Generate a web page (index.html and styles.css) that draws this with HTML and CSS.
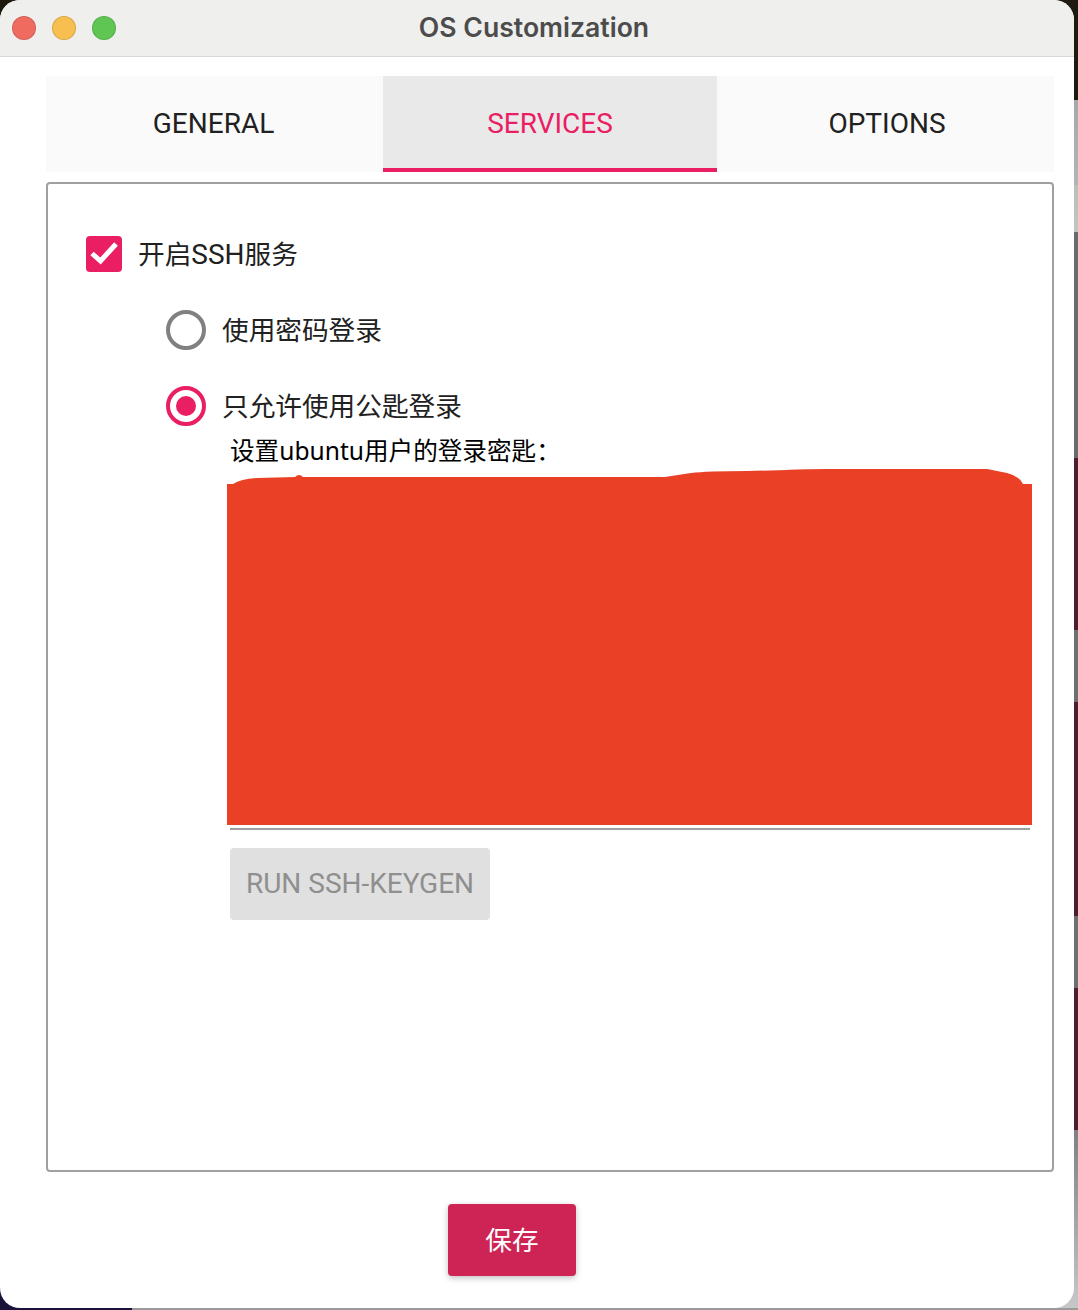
FILE: index.html
```html
<!DOCTYPE html>
<html lang="zh-CN">
<head>
  <meta charset="UTF-8" />
  <title>OS Customization</title>
  <link rel="stylesheet" href="styles.css">
</head>
<body>

  <div class="window">

    <!-- TITLE BAR -->
    <div class="titlebar">
      <div class="traffic">
        <span class="light red"></span>
        <span class="light yellow"></span>
        <span class="light green"></span>
      </div>
      <div class="title">OS Customization</div>
    </div>

    <div class="content">

      <!-- TABS -->
      <div class="tabs">
        <div class="tab">GENERAL</div>
        <div class="tab active">SERVICES</div>
        <div class="tab">OPTIONS</div>
      </div>

      <!-- SERVICES PANEL -->
      <div class="panel">
        <div class="check-row">
          <span class="checkbox">
            <svg width="36" height="36" viewBox="0 0 36 36">
              <path d="M6 17.5 L14.5 25 L30 8" fill="none" stroke="#fff" stroke-width="5"/>
            </svg>
          </span>
          <span class="row-text">开启<span class="latin">SSH</span>服务</span>
        </div>

        <div class="radio-group">
          <div class="radio-row">
            <span class="radio"></span>
            <span class="row-text">使用密码登录</span>
          </div>
          <div class="radio-row">
            <span class="radio on"></span>
            <span class="row-text">只允许使用公匙登录</span>
          </div>
        </div>

        <div class="key-block">
          <div class="key-label">设置ubuntu用户的登录密匙：</div>
          <div class="key-field">
            <!-- red scribble over the key -->
            <svg class="scribble" width="805" height="360" viewBox="0 0 805 360" preserveAspectRatio="none">
              <path d="M0 15 L6 15 Q14 10 30 9 L68 8 Q72 4 76 8 L438 8 L464 4 Q480 2 520 2 L560 1 Q570 0 600 0 L760 0 L780 4 Q792 7 796 15 L805 15 L805 356 L0 356 Z" fill="#ea4126"/>
            </svg>
          </div>
          <button class="keygen" disabled>RUN SSH-KEYGEN</button>
        </div>
      </div>

      <!-- FOOTER -->
      <div class="footer">
        <button class="save"><span class="row-text">保存</span></button>
      </div>

    </div>
  </div>

</body>
</html>
```

FILE: styles.css
```css
* {
  box-sizing: border-box;
}

html, body {
  margin: 0;
  height: 1310px;
  overflow: hidden;
}

/* what shows behind the window corners and down the right edge */
body {
  font-family: Roboto, "Noto Sans CJK SC", sans-serif;
  background:
    linear-gradient(to right, #1a1238 0, #1a1238 132px, transparent 132px) bottom left / 100% 30px no-repeat,
    linear-gradient(#9a9a9a, #9a9a9a) bottom left / 100% 2px no-repeat,
    linear-gradient(to bottom,
      #1f1a10 0, #1f1a10 100px,
      #a8a8a8 100px, #b4b4b4 185px,
      #bcbcb8 185px, #c4c4c0 232px,
      #6a6a6a 232px, #6a6a6a 458px,
      #4f1c30 458px, #4f1c30 630px,
      #6e6e6e 630px, #6e6e6e 702px,
      #4f1c30 702px, #4f1c30 916px,
      #6e6e6e 916px, #6e6e6e 988px,
      #4f1c30 988px, #4f1c30 1130px,
      #808080 1130px, #c8c8c8 1310px);
}

.window {
  width: 1074px;
  height: 1308px;
  background: #fff;
  border-radius: 20px;
  overflow: hidden;
  display: flex;
  flex-direction: column;
}

/* Title bar */
.titlebar {
  height: 57px;
  flex: none;
  background: #efefee;
  border-bottom: 1px solid #d8d8d8;
  display: flex;
  align-items: center;
  justify-content: center;
  padding: 0 6px 2px 0;
  position: relative;
}

.title {
  font-family: Inter, Roboto, sans-serif;
  font-size: 26.6px;
  font-weight: 600;
  color: #4c4c4c;
}

.traffic {
  position: absolute;
  left: 12px;
  top: 16px;
  display: flex;
  gap: 16px;
}

.light {
  width: 24px;
  height: 24px;
  border-radius: 50%;
  border: 1px solid rgba(0, 0, 0, 0.12);
}

.red { background: #ef6b60; }
.yellow { background: #f6bf50; }
.green { background: #60c653; }

.content {
  flex: 1;
  padding: 19px 20px 0 46px;
  display: flex;
  flex-direction: column;
}

/* Tabs */
.tabs {
  display: grid;
  grid-template-columns: 337px 334px 337px;
  height: 96px;
  flex: none;
  background: #fafafa;
}

.tab {
  display: flex;
  align-items: center;
  justify-content: center;
  font-size: 28px;
  color: #212121;
  padding-bottom: 2px;
}

.tab:first-child {
  padding-right: 2px;
}

.tab:last-child {
  padding-left: 3px;
}

.tab.active {
  background: #e9e9e9;
  color: #e91e63;
  border-bottom: 4px solid #e91e63;
  padding: 2px 0 0;
}

/* Panel */
.panel {
  margin-top: 10px;
  height: 990px;
  flex: none;
  border: 2px solid #a0a0a0;
  border-radius: 4px;
  padding: 52px 20px 0 38px;
}

.check-row,
.radio-row {
  display: flex;
  align-items: center;
  font-size: 26.67px;
  color: #212121;
}

/* CJK glyphs sit low in the line box, this lifts them back to centre */
.row-text {
  display: block;
  padding-bottom: 4px;
}

.latin {
  font-size: 28px;
}

.check-row {
  gap: 16px;
  height: 36px;
}

.checkbox {
  width: 36px;
  height: 36px;
  background: #e91e63;
  border-radius: 4px;
  display: block;
}

.checkbox svg {
  display: block;
}

.radio-group {
  margin-top: 38px;
  padding-left: 80px;
  display: flex;
  flex-direction: column;
  gap: 36px;
}

.radio-row {
  gap: 16px;
  height: 40px;
}

.radio {
  width: 40px;
  height: 40px;
  border-radius: 50%;
  border: 4px solid #808080;
  display: block;
  position: relative;
}

.radio.on {
  border-color: #e91e63;
}

.radio.on::after {
  content: "";
  position: absolute;
  top: 6px;
  left: 6px;
  width: 20px;
  height: 20px;
  border-radius: 50%;
  background: #e91e63;
}

/* Key field */
.key-block {
  margin-left: 141px;
}

.key-label {
  margin: 8px 0 1px 3px;
  font-family: "Noto Sans", "Noto Sans CJK SC", sans-serif;
  font-size: 24.6px;
  line-height: 34px;
  color: #000;
}

.key-field {
  height: 361px;
  border-bottom: 2px solid #a0a0a0;
  margin-left: 3px;
  margin-right: 2px;
  position: relative;
}

.scribble {
  position: absolute;
  left: -3px;
  top: 0;
  display: block;
}

.keygen {
  margin-left: 3px;
  margin-top: 18px;
  width: 260px;
  height: 72px;
  border: none;
  border-radius: 4px;
  background: #e0e0e0;
  color: #8f8f8f;
  font-family: Roboto, sans-serif;
  font-size: 28px;
  padding: 0 0 1px;
}

/* Footer */
.footer {
  display: flex;
  justify-content: center;
  padding-top: 32px;
  padding-right: 76px;
}

.save {
  width: 128px;
  height: 72px;
  border: none;
  border-radius: 4px;
  background: #cd2355;
  color: #fff;
  font-family: Roboto, "Noto Sans CJK SC", sans-serif;
  font-size: 26.67px;
  padding: 0;
  box-shadow: 0 2px 6px rgba(0, 0, 0, 0.25);
}
```
